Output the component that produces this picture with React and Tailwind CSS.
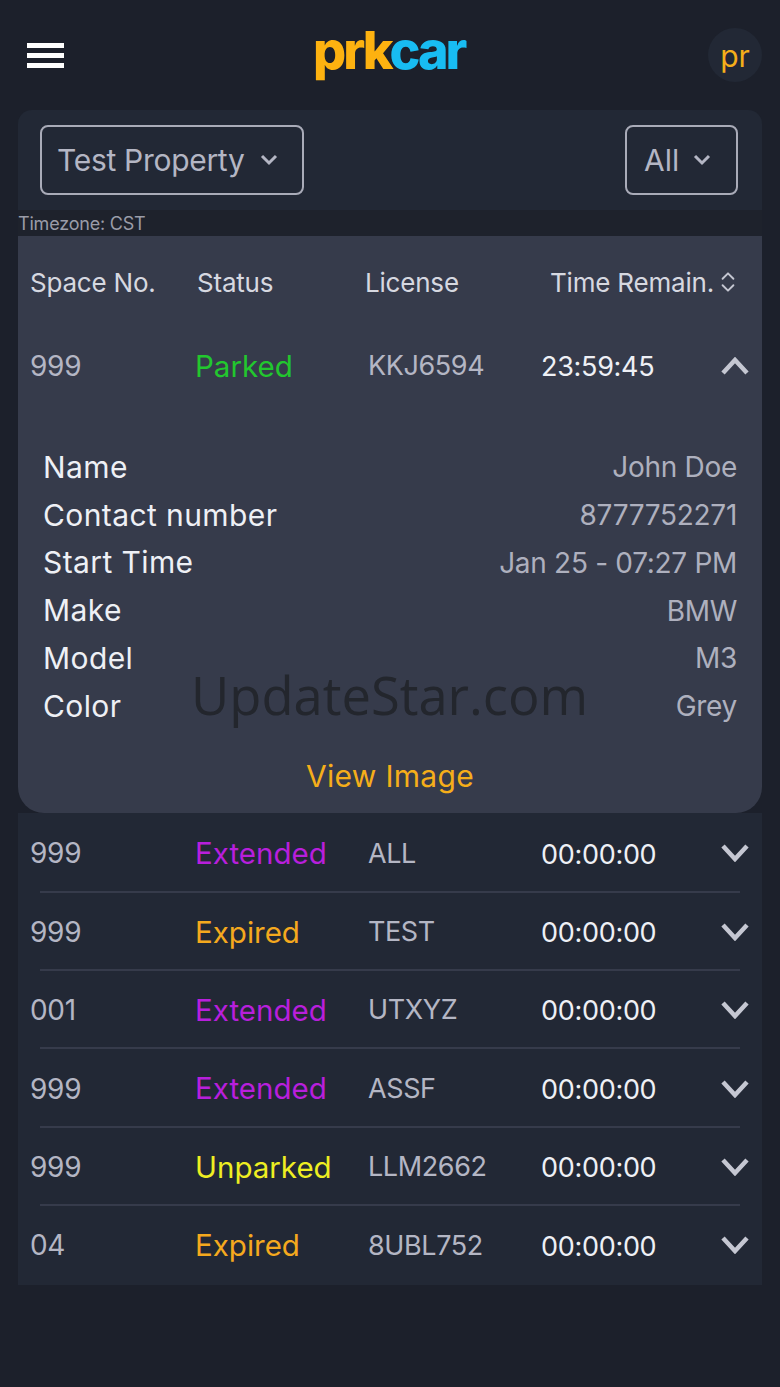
import React from "react";
import { ChevronsUpDown } from "lucide-react";

const font = { fontFamily: '"Inter","Lato",sans-serif' };

const details = [
  ["Name", "John Doe"],
  ["Contact number", "8777752271"],
  ["Start Time", "Jan 25 - 07:27 PM"],
  ["Make", "BMW"],
  ["Model", "M3"],
  ["Color", "Grey"],
];

const rows = [
  ["999", "Extended", "text-[#b81fdc]", "ALL"],
  ["999", "Expired", "text-[#f5a91e]", "TEST"],
  ["001", "Extended", "text-[#b81fdc]", "UTXYZ"],
  ["999", "Extended", "text-[#b81fdc]", "ASSF"],
  ["999", "Unparked", "text-[#eeee22]", "LLM2662"],
  ["04", "Expired", "text-[#f5a91e]", "8UBL752"],
];

function Chev({ up, w = 28, h = 18, sw = 4.5, className = "" }) {
  const points = up ? `2,${h - 2} ${w / 2},3 ${w - 2},${h - 2}` : `2,2 ${w / 2},${h - 3} ${w - 2},2`;
  return (
    <svg width={w} height={h} viewBox={`0 0 ${w} ${h}`} className={className} fill="none">
      <polyline points={points} stroke="currentColor" strokeWidth={sw} />
    </svg>
  );
}

function Row({ space, status, color, plate, time, open, last }) {
  return (
    <div className="relative flex h-[78.4px] items-center text-[28px] tracking-[-0.3px]">
      <span className="w-[177px] pl-3 text-[#b4b6c4]">{space}</span>
      <span className={`w-[173px] text-[29.5px] tracking-[0px] ${color}`}>{status}</span>
      <span className="w-[173px] pt-[1px] text-[27px] tracking-[-0.4px] text-[#b4b6c4]">{plate}</span>
      <span className="w-[180px] pt-[3px] text-[27px] text-[#eef0f5]">{time}</span>
      <Chev up={open} className="text-[#c5c7d2]" />
      {!last && <div className="absolute bottom-0 left-[22px] right-[22px] h-[2px] bg-[#363b4b]" />}
    </div>
  );
}

export default function App() {
  return (
    <div className="flex min-h-[1387px] flex-col bg-[#1c202b] px-[18px]" style={font}>
      <header className="relative flex h-[110px] items-center justify-between">
        <div className="ml-[9px] flex w-[37px] flex-col gap-[5px]">
          <span className="h-[5px] bg-white" />
          <span className="h-[5px] bg-white" />
          <span className="h-[5px] bg-white" />
        </div>
        <div className="absolute left-[295px] top-[18px] text-[52px] font-extrabold leading-[66px] tracking-[-3px]">
          <span className="text-[#fdb210]">prk</span>
          <span className="text-[#18bcf2]">car</span>
        </div>
        <div className="flex h-[54px] w-[54px] items-center justify-center rounded-full bg-[#222835] pt-[2px] text-[30px] text-[#f5ae1a]">
          pr
        </div>
      </header>

      <section className="flex h-[100px] items-start justify-between rounded-t-[14px] bg-[#222835] px-[22px] pt-[15px]">
        <div className="flex h-[70px] w-[264px] items-center gap-[15px] rounded-[8px] border-2 border-[#a9abb8] pl-[15px] text-[30px] tracking-[-0.3px] text-[#b4b6c4]">
          Test Property
          <Chev w={18} h={12} sw={3} />
        </div>
        <div className="mr-[2px] flex h-[70px] w-[113px] items-center gap-[14px] rounded-[8px] border-2 border-[#a9abb8] pl-[17px] text-[30px] text-[#b4b6c4]">
          All
          <Chev w={18} h={12} sw={3} />
        </div>
      </section>

      <div className="flex h-[26px] items-center bg-[#1e222c] text-[18px] tracking-[-0.2px] text-[#9a9ca8]">Timezone: CST</div>

      <section className="rounded-b-[26px] bg-[#363b4b]">
        <div className="flex h-[92px] items-center text-[26px] tracking-[-0.2px] text-[#d6d8e0]">
          <span className="w-[179px] pl-3">Space No.</span>
          <span className="w-[168px]">Status</span>
          <span className="w-[185px]">License</span>
          <span className="flex items-center gap-[1px]">
            Time Remain.
            <ChevronsUpDown className="h-[26px] w-[26px] text-[#c5c7d2]" strokeWidth={1.75} />
          </span>
        </div>
        <div className="-mt-[1px]">
          <Row space="999" status="Parked" color="text-[#22c72e]" plate="KKJ6594" time="23:59:45" open last />
        </div>
        <div className="relative flex flex-col px-[25px] pt-[38px]">
          {details.map(([k, v]) => (
            <div key={k} className="flex h-[47.8px] items-center justify-between">
              <span className="text-[30px] tracking-[0.4px] text-[#eef0f5]">{k}</span>
              <span className="text-[28px] tracking-[-0.3px] text-[#aeb0be]">{v}</span>
            </div>
          ))}
          <div className="pointer-events-none absolute left-[173px] top-[255px] text-[52.5px] leading-[70px] tracking-normal text-[#23262d]" style={{ fontFamily: '"Open Sans",sans-serif' }}>
            UpdateStar.com
          </div>
        </div>
        <div className="flex h-[83px] items-start justify-center pt-[28px] text-[30px] leading-[36px] tracking-[0.3px] text-[#f5ae1a]">
          View Image
        </div>
      </section>

      <section className="bg-[#222835] pt-[1px]">
        {rows.map((r, i) => (
          <Row
            key={i}
            space={r[0]}
            status={r[1]}
            color={r[2]}
            plate={r[3]}
            time="00:00:00"
            last={i === rows.length - 1}
          />
        ))}
      </section>
    </div>
  );
}
